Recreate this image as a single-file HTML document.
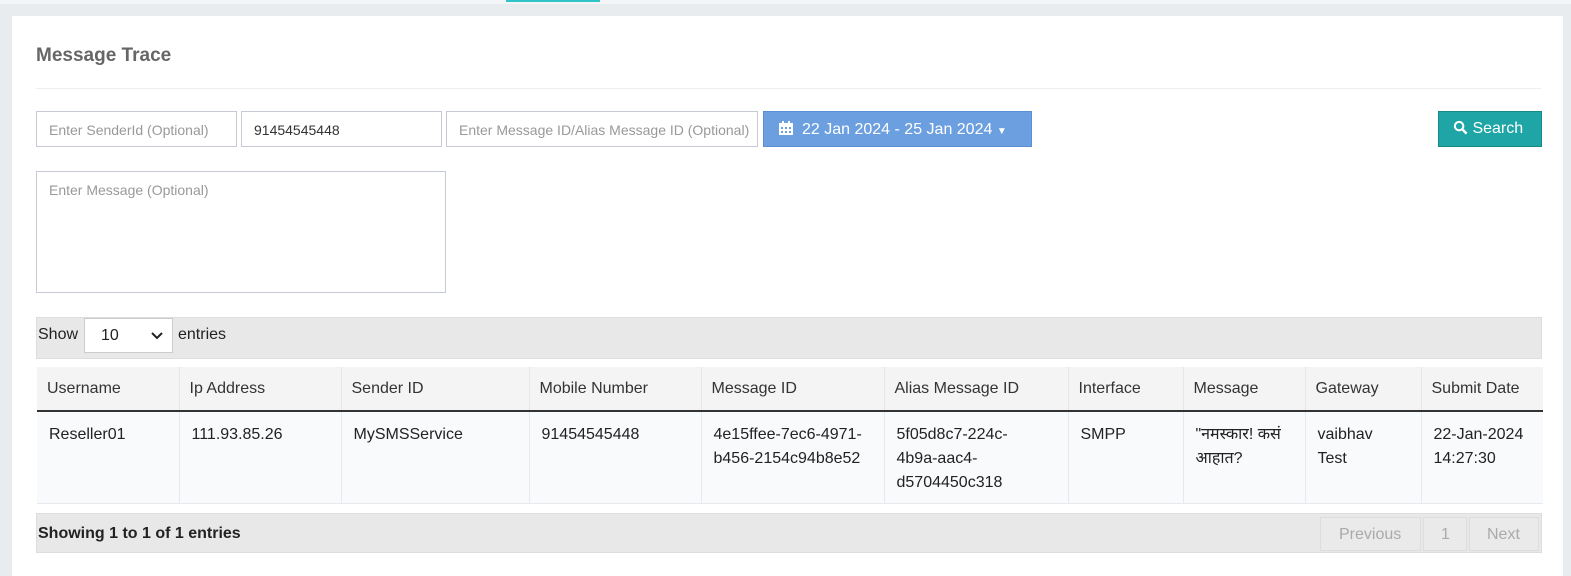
<!DOCTYPE html><html><head><meta charset="utf-8"><style>
*{box-sizing:border-box;margin:0;padding:0}
body{width:1571px;height:573px;background:#e9ecef;font-family:"Liberation Sans",sans-serif;font-size:16px;color:#222;position:relative;overflow:hidden}
.a{position:absolute}
.panel{left:12px;top:16px;width:1551px;height:560px;background:#fff}
.inp{border:1px solid #c5cad6;height:36px;font-size:14px;color:#999;padding:10px 12px;white-space:nowrap;overflow:hidden}
table{border-collapse:collapse;position:absolute;left:37px;top:367px;width:1506px;font-size:16px;table-layout:fixed}
th{background:#f4f4f4;font-weight:normal;text-align:left;height:44px;padding:0 10px;border-left:1px solid #e6e6e6;border-bottom:2px solid #333;color:#333;white-space:nowrap}
td{background:#f9fafc;vertical-align:top;padding:11px 12px 8px;height:91px;line-height:24px;border-left:1px solid #e6e9ee;border-bottom:1px solid #e6e9ee;color:#222;word-wrap:break-word}
th:first-child,td:first-child{border-left:none}
</style></head><body>
<div class="a" style="left:0;top:0;width:1571px;height:4px;background:#f4f5f6"></div>
<div class="a" style="left:506px;top:0;width:94px;height:2px;background:#2ec4c8"></div>
<div class="a panel"></div>
<div class="a" style="left:36px;top:45px;font-size:19px;font-weight:bold;color:#666">Message Trace</div>
<div class="a" style="left:36px;top:88px;width:1505px;height:1px;background:#eee"></div>
<div class="a inp" style="left:36px;top:111px;width:201px">Enter SenderId (Optional)</div>
<div class="a inp" style="left:241px;top:111px;width:201px;color:#333">91454545448</div>
<div class="a inp" style="left:446px;top:111px;width:312px">Enter Message ID/Alias Message ID (Optional)</div>
<div class="a" style="left:763px;top:111px;width:269px;height:36px;background:#6c9fe0;border:1px solid #5a8fd6;color:#fff;font-size:16px;padding:8px 0 0 14px">
<svg width="16" height="16" style="vertical-align:-2px;margin-right:8px" viewBox="0 0 16 16"><rect x="1" y="3" width="14" height="12" fill="#fff"/><rect x="4" y="1" width="2" height="4" fill="#fff"/><rect x="10" y="1" width="2" height="4" fill="#fff"/><g fill="#6c9fe0"><rect x="3" y="7" width="2" height="2"/><rect x="7" y="7" width="2" height="2"/><rect x="11" y="7" width="2" height="2"/><rect x="3" y="11" width="2" height="2"/><rect x="7" y="11" width="2" height="2"/><rect x="11" y="11" width="2" height="2"/></g></svg>22 Jan 2024 - 25 Jan 2024 <span style="font-size:10px">▼</span></div>
<div class="a" style="left:1438px;top:111px;width:104px;height:36px;background:#1fa5a5;border:1px solid #168a8a;color:#fff;padding:8px 0 0 14px">
<svg width="15" height="15" style="vertical-align:-2px" viewBox="0 0 16 16"><circle cx="6.5" cy="6.5" r="4.5" fill="none" stroke="#fff" stroke-width="2.2"/><path d="M10 10l4.5 4.5" stroke="#fff" stroke-width="2.6"/></svg> Search</div>
<div class="a inp" style="left:36px;top:171px;width:410px;height:122px">Enter Message (Optional)</div>
<div class="a" style="left:36px;top:317px;width:1506px;height:42px;background:#e8e8e8;border:1px solid #ddd"></div>
<div class="a" style="left:38px;top:326px">Show</div>
<div class="a" style="left:84px;top:318px;width:89px;height:35px;background:#fff;border:1px solid #ccc;padding:8px 0 0 16px">10<svg class="a" style="left:66px;top:13px" width="12" height="8" viewBox="0 0 12 8"><path d="M1 1l5 5 5-5" fill="none" stroke="#222" stroke-width="2"/></svg></div>
<div class="a" style="left:178px;top:326px">entries</div>
<table><colgroup><col style="width:142px"><col style="width:162px"><col style="width:188px"><col style="width:172px"><col style="width:183px"><col style="width:184px"><col style="width:115px"><col style="width:122px"><col style="width:116px"><col style="width:122px"></colgroup>
<tr><th>Username</th><th>Ip Address</th><th>Sender ID</th><th>Mobile Number</th><th>Message ID</th><th>Alias Message ID</th><th>Interface</th><th>Message</th><th>Gateway</th><th>Submit Date</th></tr>
<tr><td>Reseller01</td><td>111.93.85.26</td><td>MySMSService</td><td>91454545448</td><td>4e15ffee-7ec6-4971-<br>b456-2154c94b8e52</td><td>5f05d8c7-224c-<br>4b9a-aac4-<br>d5704450c318</td><td>SMPP</td><td style="font-family:'Liberation Sans','Noto Sans CJK SC',sans-serif">"नमस्कार! कसं<br>आहात?</td><td>vaibhav<br>Test</td><td>22-Jan-2024<br>14:27:30</td></tr></table>
<div class="a" style="left:36px;top:513px;width:1506px;height:40px;background:#e8e8e8;border:1px solid #ddd"></div>
<div class="a" style="left:38px;top:525px;font-weight:bold">Showing 1 to 1 of 1 entries</div>
<div class="a" style="left:1320px;top:517px;width:101px;height:34px;border:1px solid #ddd;background:#eaeaea;color:#aaa;padding:8px 0 0 18px">Previous</div>
<div class="a" style="left:1423px;top:517px;width:44px;height:34px;border:1px solid #ddd;background:#eaeaea;color:#aaa;padding:8px 0 0 17px">1</div>
<div class="a" style="left:1469px;top:517px;width:70px;height:34px;border:1px solid #ddd;background:#eaeaea;color:#aaa;padding:8px 0 0 17px">Next</div>
</body></html>
